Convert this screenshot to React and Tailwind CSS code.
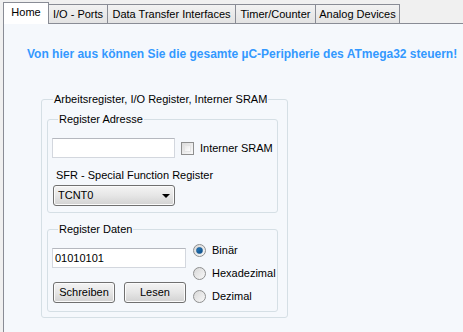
import React from 'react'

const tabs = [
  { label: 'I/O - Ports', w: 'w-[60px]' },
  { label: 'Data Transfer Interfaces', w: 'w-[129px]' },
  { label: 'Timer/Counter', w: 'w-[81px]' },
  { label: 'Analog Devices', w: 'w-[85px]' },
]

function GroupBox({ title, className, children }) {
  return (
    <fieldset className={'border border-[#d5dfe5] rounded-[3px] ' + className}>
      <legend className="ml-[6px] px-[1px] leading-[13px]">{title}</legend>
      {children}
    </fieldset>
  )
}

function TextBox({ value, className }) {
  return (
    <div
      className={
        'h-[20px] bg-white border border-[#d3d7de] border-t-[#b5b8bf] pl-[2px] flex items-center ' +
        className
      }
    >
      {value}
    </div>
  )
}

function Button({ children }) {
  return (
    <div className="w-[62px] h-[21px] rounded-[3px] border border-[#707070] bg-gradient-to-b from-[#f4f4f4] via-[#e6e6e6] to-[#d2d2d2] shadow-[inset_0_0_0_1px_#fbfbfb] flex items-center justify-center">
      {children}
    </div>
  )
}

function Radio({ checked, label }) {
  return (
    <div className="flex items-center h-[13px]">
      <span className="w-[13px] h-[13px] rounded-full border border-[#8e8f8f] bg-gradient-to-br from-[#d8d8d8] to-[#f8f8f8] flex items-center justify-center">
        {checked && (
          <span className="w-[7px] h-[7px] rounded-full bg-gradient-to-br from-[#2a7fc0] to-[#0d4c86] border border-[#1b5d96]" />
        )}
      </span>
      <span className="ml-[6px]">{label}</span>
    </div>
  )
}

export default function App() {
  return (
    <div
      className="w-[463px] h-[332px] overflow-hidden bg-[#f0f0f0] text-[11px] text-black"
      style={{ fontFamily: '"Liberation Sans", Arial, sans-serif' }}
    >
      {/* tab strip */}
      <div className="flex items-end h-[23px] pl-[3px] pt-[1px]">
        <div className="w-[46px] h-[22px] bg-white border border-b-0 border-[#898c95] flex items-center justify-center pb-[2px] relative z-10 -mb-px">
          Home
        </div>
        {tabs.map((t) => (
          <div
            key={t.label}
            className={
              t.w +
              ' h-[19px] -ml-px border border-b-0 border-[#898c95] bg-gradient-to-b from-[#f2f2f2] to-[#e3e3e3] flex items-center justify-center'
            }
          >
            {t.label}
          </div>
        ))}
      </div>

      {/* tab page */}
      <div className="ml-[3px] h-[320px] border-t border-l border-[#898c95] bg-[#f5f8fc] pt-[23px]">
        <p className="pl-[23px] text-[12px] font-bold leading-[14px] text-[#3399ff]">
          Von hier aus können Sie die gesamte µC-Peripherie des ATmega32 steuern!
        </p>

        <GroupBox
          title="Arbeitsregister, I/O Register, Interner SRAM"
          className="ml-[37px] mt-[32px] w-[247px] pl-[5px] pr-[9px] pb-[5px]"
        >
          <GroupBox title="Register Adresse" className="mt-[7px] w-[231px] pl-[4px] pb-[6px]">
            <div className="flex items-center mt-[12px]">
              <TextBox className="w-[123px]" />
              <span className="ml-[6px] w-[13px] h-[13px] border border-[#8e8f8f] bg-gradient-to-br from-[#dcdcdc] to-[#fafafa] p-[2px]">
                <span className="block w-full h-full border border-[#e5e5e5] bg-gradient-to-br from-[#e9e9e9] to-[#ffffff]" />
              </span>
              <span className="ml-[6px]">Interner SRAM</span>
            </div>
            <div className="mt-[11px] ml-[4px] leading-[13px]">SFR - Special Function Register</div>
            <div className="mt-[3px] ml-[1px] w-[122px] h-[21px] rounded-[3px] border border-[#707070] bg-gradient-to-b from-[#f4f4f4] via-[#e6e6e6] to-[#d2d2d2] shadow-[inset_0_0_0_1px_#fbfbfb] flex items-center justify-between pl-[4px] pr-[4px]">
              <span>TCNT0</span>
              <span className="w-0 h-0 border-l-[4px] border-r-[4px] border-t-[4px] border-l-transparent border-r-transparent border-t-black" />
            </div>
          </GroupBox>

          <GroupBox title="Register Daten" className="mt-[10px] w-[231px] pl-[4px] pb-[8px]">
            <div className="flex mt-[2px]">
              <div className="flex flex-col">
                <TextBox value="01010101" className="w-[134px] mt-[10px]" />
                <div className="flex gap-[9px] mt-[14px] ml-[1px]">
                  <Button>Schreiben</Button>
                  <Button>Lesen</Button>
                </div>
              </div>
              <div className="flex flex-col gap-[10px] ml-[7px] mt-[6px]">
                <Radio checked label="Binär" />
                <Radio label="Hexadezimal" />
                <Radio label="Dezimal" />
              </div>
            </div>
          </GroupBox>
        </GroupBox>
      </div>
    </div>
  )
}
